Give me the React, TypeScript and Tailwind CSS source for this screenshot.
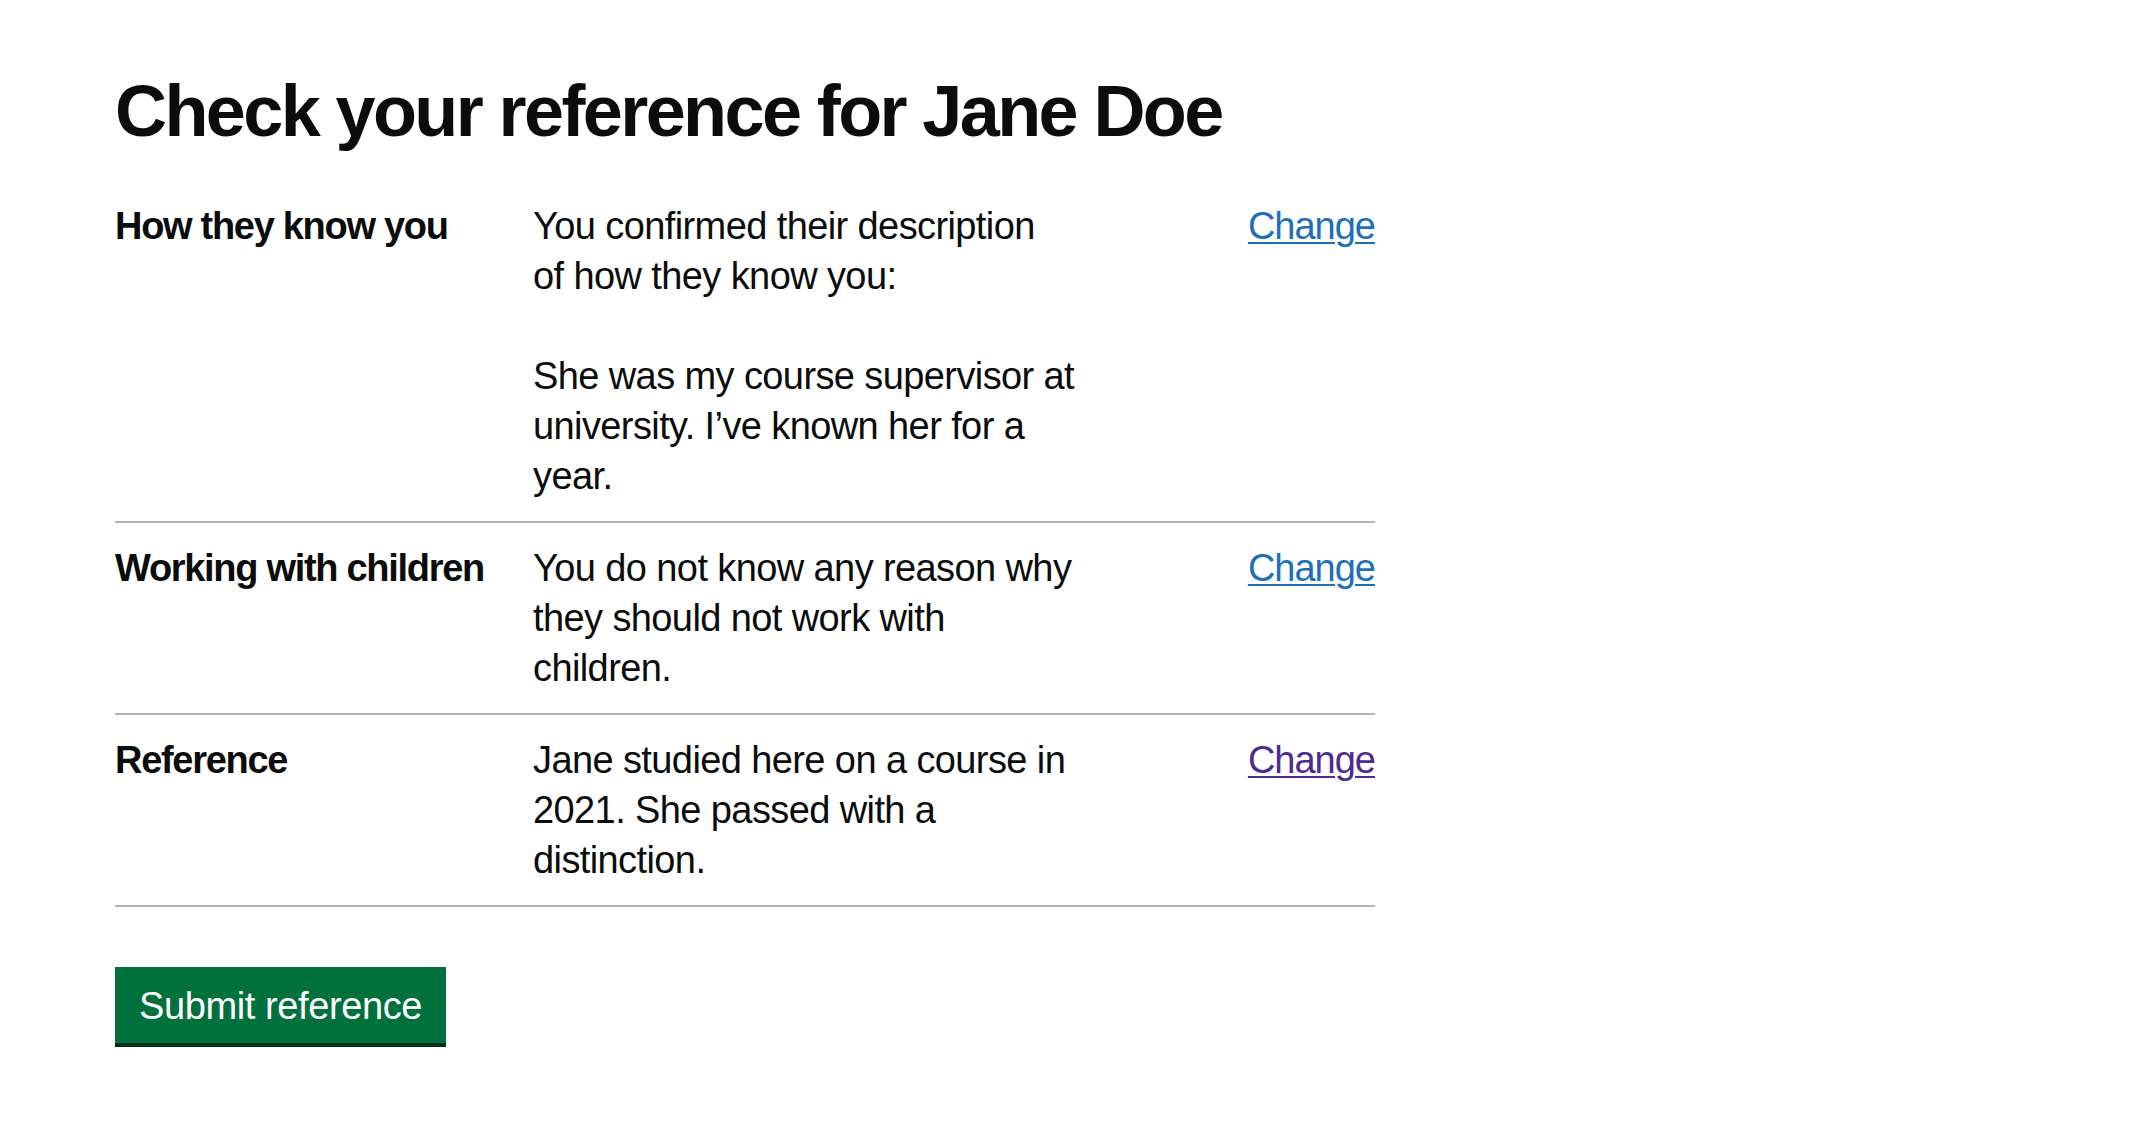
const font = { fontFamily: '"Liberation Sans", Arial, Helvetica, sans-serif' };

type Row = {
  label: string;
  paragraphs: string[][];
  visited?: boolean;
};

const rows: Row[] = [
  {
    label: 'How they know you',
    paragraphs: [
      ['You confirmed their description', 'of how they know you:'],
      ['She was my course supervisor at', 'university. I’ve known her for a', 'year.'],
    ],
  },
  {
    label: 'Working with children',
    paragraphs: [['You do not know any reason why', 'they should not work with', 'children.']],
  },
  {
    label: 'Reference',
    paragraphs: [['Jane studied here on a course in', '2021. She passed with a', 'distinction.']],
    visited: true,
  },
];

export default function App() {
  return (
    <div className="min-h-screen bg-white text-[#0b0c0c] pl-[115px] pt-[71px]" style={font}>
      <h1 className="text-[72px] leading-[80px] font-bold tracking-[-2.6px] mb-[30px]">
        Check your reference for Jane Doe
      </h1>

      <dl className="w-[1260px] mb-[60px]">
        {rows.map((row) => (
          <div key={row.label} className="flex border-b-2 border-[#b1b4b6] py-[20px] text-[38px] leading-[50px]">
            <dt className="w-[418px] shrink-0 font-bold tracking-[-1.3px]">{row.label}</dt>
            <dd className="flex-1 tracking-[-0.6px]">
              {row.paragraphs.map((lines, i) => (
                <p key={i} className={i < row.paragraphs.length - 1 ? 'mb-[50px]' : ''}>
                  {lines.map((line) => (
                    <span key={line} className="block whitespace-nowrap">
                      {line}
                    </span>
                  ))}
                </p>
              ))}
            </dd>
            <dd className="shrink-0 text-right">
              <a
                href="#"
                className={
                  'underline decoration-2 underline-offset-[3px] tracking-[-1px] ' +
                  (row.visited ? 'text-[#4c2c92]' : 'text-[#1d70b8]')
                }
              >
                Change
              </a>
            </dd>
          </div>
        ))}
      </dl>

      <button className="bg-[#00703c] text-white text-[38px] leading-[38px] tracking-[-0.4px] border-4 border-transparent pt-[16px] pb-[14px] px-[20px] shadow-[0_4px_0_#002d18]">
        Submit reference
      </button>
    </div>
  );
}
